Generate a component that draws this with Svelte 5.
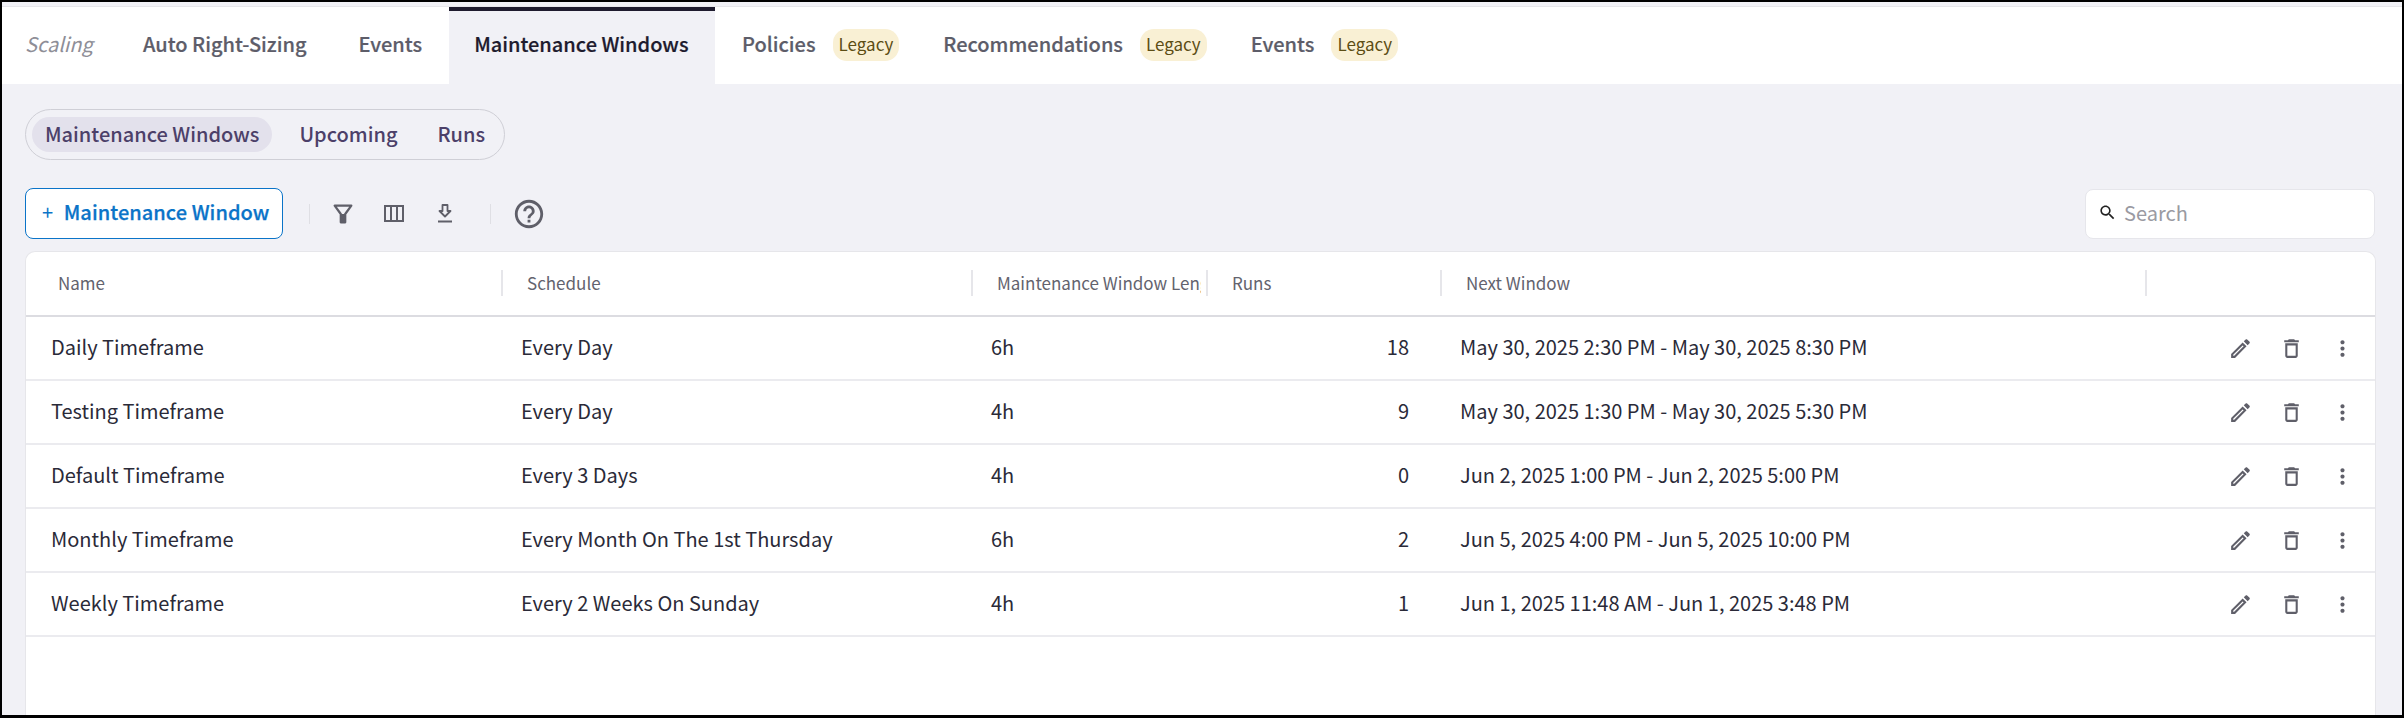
<script>
	const tabs = [
		{ label: 'Auto Right-Sizing' },
		{ label: 'Events' },
		{ label: 'Maintenance Windows', active: true },
		{ label: 'Policies', legacy: true },
		{ label: 'Recommendations', legacy: true },
		{ label: 'Events', legacy: true }
	];

	const subTabs = ['Maintenance Windows', 'Upcoming', 'Runs'];

	const columns = ['Name', 'Schedule', 'Maintenance Window Length', 'Runs', 'Next Window', ''];

	const rows = [
		['Daily Timeframe', 'Every Day', '6h', 18, 'May 30, 2025 2:30 PM - May 30, 2025 8:30 PM'],
		['Testing Timeframe', 'Every Day', '4h', 9, 'May 30, 2025 1:30 PM - May 30, 2025 5:30 PM'],
		['Default Timeframe', 'Every 3 Days', '4h', 0, 'Jun 2, 2025 1:00 PM - Jun 2, 2025 5:00 PM'],
		['Monthly Timeframe', 'Every Month On The 1st Thursday', '6h', 2, 'Jun 5, 2025 4:00 PM - Jun 5, 2025 10:00 PM'],
		['Weekly Timeframe', 'Every 2 Weeks On Sunday', '4h', 1, 'Jun 1, 2025 11:48 AM - Jun 1, 2025 3:48 PM']
	];
</script>

<div class="frame">
	<nav class="tabs">
		<span class="section">Scaling</span>
		{#each tabs as tab}
			<div class="tab" class:active={tab.active} class:has-legacy={tab.legacy}>
				<span class="tab-label">{tab.label}</span>
				{#if tab.legacy}
					<span class="legacy">Legacy</span>
				{/if}
			</div>
		{/each}
	</nav>

	<main class="content">
		<div class="subtabs">
			{#each subTabs as sub, i}
				<span class="subtab" class:current={i === 0}>{sub}</span>
			{/each}
		</div>

		<div class="toolbar">
			<button class="add"><span class="plus">+</span> Maintenance Window</button>
			<span class="divider first"></span>
			<span class="tool">
				<svg width="20" height="20" viewBox="0 0 18 18">
					<path d="M1.500 1.500h15L11 9v7.500H7V9z" fill="none" stroke="#5f5f69" stroke-width="2" stroke-linejoin="round" />
					<path d="M7 9h4v7.500H7z" fill="#5f5f69" />
				</svg>
			</span>
			<span class="tool">
				<svg width="20" height="17" viewBox="0 0 20 17">
					<path d="M1 1h18v15H1zM7 1v15M13 1v15" fill="none" stroke="#5f5f69" stroke-width="2" />
				</svg>
			</span>
			<span class="tool">
				<svg width="16" height="19" viewBox="0 0 16 19">
					<path d="M5.500 1h5v6h3L8 12.500 2.500 7h3z" fill="none" stroke="#5f5f69" stroke-width="1.800" stroke-linejoin="round" />
					<path d="M1 17.500h14" stroke="#5f5f69" stroke-width="2" />
				</svg>
			</span>
			<span class="divider second"></span>
			<svg class="help" width="34" height="34" viewBox="0 0 24 24">
				<path fill="#5f5f69" d="M11 18h2v-2h-2v2zm1-16C6.480 2 2 6.480 2 12s4.480 10 10 10 10-4.480 10-10S17.520 2 12 2zm0 18c-4.410 0-8-3.590-8-8s3.590-8 8-8 8 3.590 8 8-3.590 8-8 8zm0-14c-2.210 0-4 1.790-4 4h2c0-1.100.9-2 2-2s2 .9 2 2c0 2-3 1.750-3 5h2c0-2.250 3-2.500 3-5 0-2.210-1.790-4-4-4z" />
			</svg>

			<div class="search">
				<svg width="19" height="19" viewBox="0 0 24 24">
					<path fill="#222" d="M15.500 14h-.79l-.28-.27C15.410 12.590 16 11.110 16 9.500 16 5.910 13.090 3 9.500 3S3 5.910 3 9.500 5.910 16 9.500 16c1.610 0 3.090-.59 4.230-1.570l.27.28v.79l5 4.990L20.490 19l-4.990-5zm-6 0C7.010 14 5 11.990 5 9.500S7.010 5 9.500 5 14 7.010 14 9.500 11.990 14 9.500 14z" />
				</svg>
				<span>Search</span>
			</div>
		</div>

		<section class="card">
			<div class="row head">
				{#each columns as col}
					<div class="th"><span class="label"><span class="clip">{col}</span></span></div>
				{/each}
			</div>
			{#each rows as row}
				<div class="row">
					<div class="td">{row[0]}</div>
					<div class="td">{row[1]}</div>
					<div class="td">{row[2]}</div>
					<div class="td num">{row[3]}</div>
					<div class="td">{row[4]}</div>
					<div class="td actions">
						<svg width="25" height="25" viewBox="0 0 24 24">
							<path d="M3 17.250V21h3.750L17.810 9.940l-3.750-3.750L3 17.250zM5.920 19H5v-.92l9.060-9.060.92.92L5.920 19zM20.710 5.630l-2.340-2.340c-.2-.2-.45-.29-.71-.29s-.51.1-.7.29l-1.830 1.830 3.750 3.750 1.830-1.830c.39-.39.39-1.020 0-1.410z" />
						</svg>
						<svg width="25" height="25" viewBox="0 0 24 24">
							<path d="M6 19c0 1.100.9 2 2 2h8c1.100 0 2-.9 2-2V7H6v12zM8 9h8v10H8V9zm7.500-5l-1-1h-5l-1 1H5v2h14V4h-3.500z" />
						</svg>
						<svg width="25" height="25" viewBox="0 0 24 24">
							<path d="M12 8c1.100 0 2-.9 2-2s-.9-2-2-2-2 .9-2 2 .9 2 2 2zm0 2c-1.100 0-2 .9-2 2s.9 2 2 2 2-.9 2-2-.9-2-2-2zm0 6c-1.100 0-2 .9-2 2s.9 2 2 2 2-.9 2-2-.9-2-2-2z" />
						</svg>
					</div>
				</div>
			{/each}
		</section>
	</main>
</div>

<style>
	:global(body) {
		margin: 0;
		background: #000;
	}

	.frame {
		box-sizing: border-box;
		height: 718px;
		display: flex;
		flex-direction: column;
		overflow: hidden;
		border: solid #000;
		border-width: 2px 2px 3px;
		background: #f1f1f6;
		font-family: 'Noto Sans CJK SC', 'Noto Sans', sans-serif;
		font-size: 20px;
		color: #2a2a38;
	}

	.tabs {
		flex: none;
		display: flex;
		gap: 2px;
		height: 77px;
		margin-top: 4px;
		border-top: 1px solid #e6e6ea;
		background: #fff;
		font-weight: 500;
		color: #5d5d69;
	}

	.section {
		width: 114px;
		padding-left: 23px;
		box-sizing: border-box;
		line-height: 73px;
		font-style: italic;
		font-weight: 400;
		color: #8e8e97;
	}

	.tab {
		display: flex;
		align-items: center;
		gap: 18px;
		padding: 0 25px 2px;
	}

	.tab-label {
		padding-bottom: 3px;
		-webkit-text-stroke: 0.2px currentColor;
	}

	.tab.has-legacy {
		gap: 17px;
		padding-right: 17px;
	}

	.tab.active {
		border-top: 4px solid #1e1b2e;
		background: #f1f1f6;
		color: #1e1b2e;
		padding-right: 26.5px;
		padding-bottom: 6px;
	}

	.legacy {
		padding: 0 6px 2px;
		border-radius: 14px;
		background: #f9f0d4;
		color: #5c4d14;
		font-size: 17px;
		font-weight: 400;
		line-height: 30px;
	}

	.content {
		flex: 1;
		display: flex;
		flex-direction: column;
		padding: 25px 26px 0 23px;
		min-height: 0;
	}

	.subtabs {
		align-self: flex-start;
		display: flex;
		gap: 14px;
		height: 51px;
		box-sizing: border-box;
		padding: 7px 6px;
		border: 1px solid #cfcfd6;
		border-radius: 26px;
		font-weight: 500;
		line-height: 34px;
		color: #4c4069;
	}

	.subtab {
		padding: 0 13px;
		border-radius: 18px;
	}

	.subtab.current {
		background: #e3e1ec;
	}

	.toolbar {
		flex: none;
		display: flex;
		align-items: center;
		height: 51px;
		margin-top: 28px;
	}

	.add {
		height: 51px;
		padding: 0 13px 4px 16px;
		border: 1px solid #0b74c8;
		border-radius: 8px;
		background: #fff;
		color: #0b74c8;
		font: 500 20px 'Noto Sans CJK SC', 'Noto Sans', sans-serif;
		letter-spacing: 0.05px;
		-webkit-text-stroke: 0.25px currentColor;
	}

	.plus {
		font-weight: 400;
		margin-right: 6px;
		-webkit-text-stroke: 0;
	}

	.divider {
		width: 1px;
		height: 20px;
		background: #dfdfe4;
	}

	.divider.first {
		margin-left: 26px;
		margin-right: 7px;
	}

	.divider.second {
		margin-left: 20px;
	}

	.tool {
		width: 51px;
		display: flex;
		justify-content: center;
	}

	.help {
		margin-left: 21px;
	}

	.search {
		margin-left: auto;
		margin-right: 1px;
		width: 290px;
		height: 50px;
		box-sizing: border-box;
		display: flex;
		align-items: center;
		gap: 7px;
		padding: 0 0 2px 12px;
		border: 1px solid #e6e6eb;
		border-radius: 8px;
		background: #fff;
		color: #9a9aa2;
	}

	.card {
		flex: 1;
		margin-top: 12px;
		border: 1px solid #e6e6ea;
		border-bottom: 0;
		border-radius: 10px 10px 0 0;
		background: #fff;
	}

	.row {
		display: grid;
		grid-template-columns: 475px 470px 235px 234px 705px 1fr;
		height: 64px;
		box-sizing: border-box;
		border-bottom: 2px solid #ebebef;
		align-items: center;
	}

	.row.head {
		height: 65px;
		border-bottom-color: #dcdce1;
		font-size: 17px;
		color: #63636e;
	}

	.label {
		display: block;
		height: 26px;
		padding-left: 24px;
		border-left: 2px solid #e6e6ea;
	}

	.clip {
		display: block;
		height: 25px;
		margin: -2px 5px 0 0;
		line-height: 25px;
		overflow: hidden;
		white-space: nowrap;
	}

	.th:first-child .label {
		border-left: 0;
		padding-left: 32px;
	}

	.td {
		padding: 0 0 3px 20px;
		line-height: 29px;
	}

	.td:first-child {
		padding-left: 25px;
	}

	.td.num {
		padding: 0 31px 3px 0;
		text-align: right;
	}

	.td.actions {
		display: flex;
		justify-content: flex-end;
		gap: 26px;
		padding: 0 20px 0 0;
		fill: #5f5f69;
	}
</style>
